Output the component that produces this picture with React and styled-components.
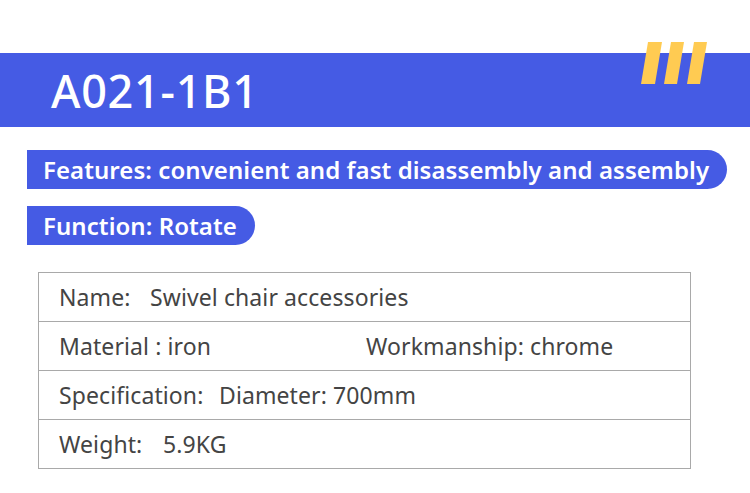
import styled, { createGlobalStyle } from 'styled-components'

const GlobalStyle = createGlobalStyle`
  html, body {
    margin: 0;
    padding: 0;
    background: #ffffff;
  }
  body {
    font-family: "Noto Sans", "Open Sans", sans-serif;
  }
`

const Page = styled.div`
  width: 750px;
  height: 493px;
  background: #ffffff;
  padding-top: 53px;
  box-sizing: border-box;
  overflow: hidden;
`

const Banner = styled.header`
  position: relative;
  height: 74px;
  background: #455be4;
  display: flex;
  align-items: center;
  padding-left: 51px;
`

const Title = styled.h1`
  margin: 0;
  color: #ffffff;
  font-size: 45px;
  font-weight: 500;
  letter-spacing: 0.7px;
  line-height: 1;
`

const Stripes = styled.svg`
  position: absolute;
  top: -11px;
  left: 638px;
`

const Pills = styled.div`
  display: flex;
  flex-direction: column;
  align-items: flex-start;
  gap: 17px;
  margin-top: 23px;
  padding-left: 27px;
`

const Pill = styled.div`
  background: #455be4;
  color: #ffffff;
  font-size: 24px;
  font-weight: 600;
  height: 39px;
  display: flex;
  align-items: center;
  padding: 0 18px 0 16px;
  border-radius: 0 20px 20px 0;
  white-space: nowrap;
  letter-spacing: 0.06px;
`

const Table = styled.div`
  margin: 27px 0 0 38px;
  width: 651px;
  border: 1px solid #a9a9a9;
`

const Row = styled.div`
  height: 48px;
  display: flex;
  align-items: center;
  padding-left: 20px;
  color: #444444;
  font-size: 23px;
  letter-spacing: 0.1px;
  border-top: ${p => (p.$first ? 'none' : '1px solid #a9a9a9')};
  white-space: nowrap;
`

const Cell = styled.span`
  width: ${p => p.$w || 'auto'};
  flex: none;
`

const rows = [
  [['Name:', '91px'], ['Swivel chair accessories']],
  [['Material : iron', '307px'], ['Workmanship: chrome']],
  [['Specification:', '160px'], ['Diameter: 700mm']],
  [['Weight:', '104px'], ['5.9KG']],
]

export default function App() {
  return (
    <>
      <GlobalStyle />
      <Page>
        <Banner>
          <Title>A021-1B1</Title>
          <Stripes width="72" height="44" viewBox="0 0 72 44">
            <polygon points="10,0 24,0 17,42 3,42" fill="#ffcb52" />
            <polygon points="33,0 46,0 39,42 26,42" fill="#ffcb52" />
            <polygon points="56,0 69,0 62,42 49,42" fill="#ffcb52" />
          </Stripes>
        </Banner>
        <Pills>
          <Pill>Features: convenient and fast disassembly and assembly</Pill>
          <Pill>Function: Rotate</Pill>
        </Pills>
        <Table>
          {rows.map((cells, i) => (
            <Row key={i} $first={i === 0}>
              {cells.map(([text, w], j) => (
                <Cell key={j} $w={w}>{text}</Cell>
              ))}
            </Row>
          ))}
        </Table>
      </Page>
    </>
  )
}
